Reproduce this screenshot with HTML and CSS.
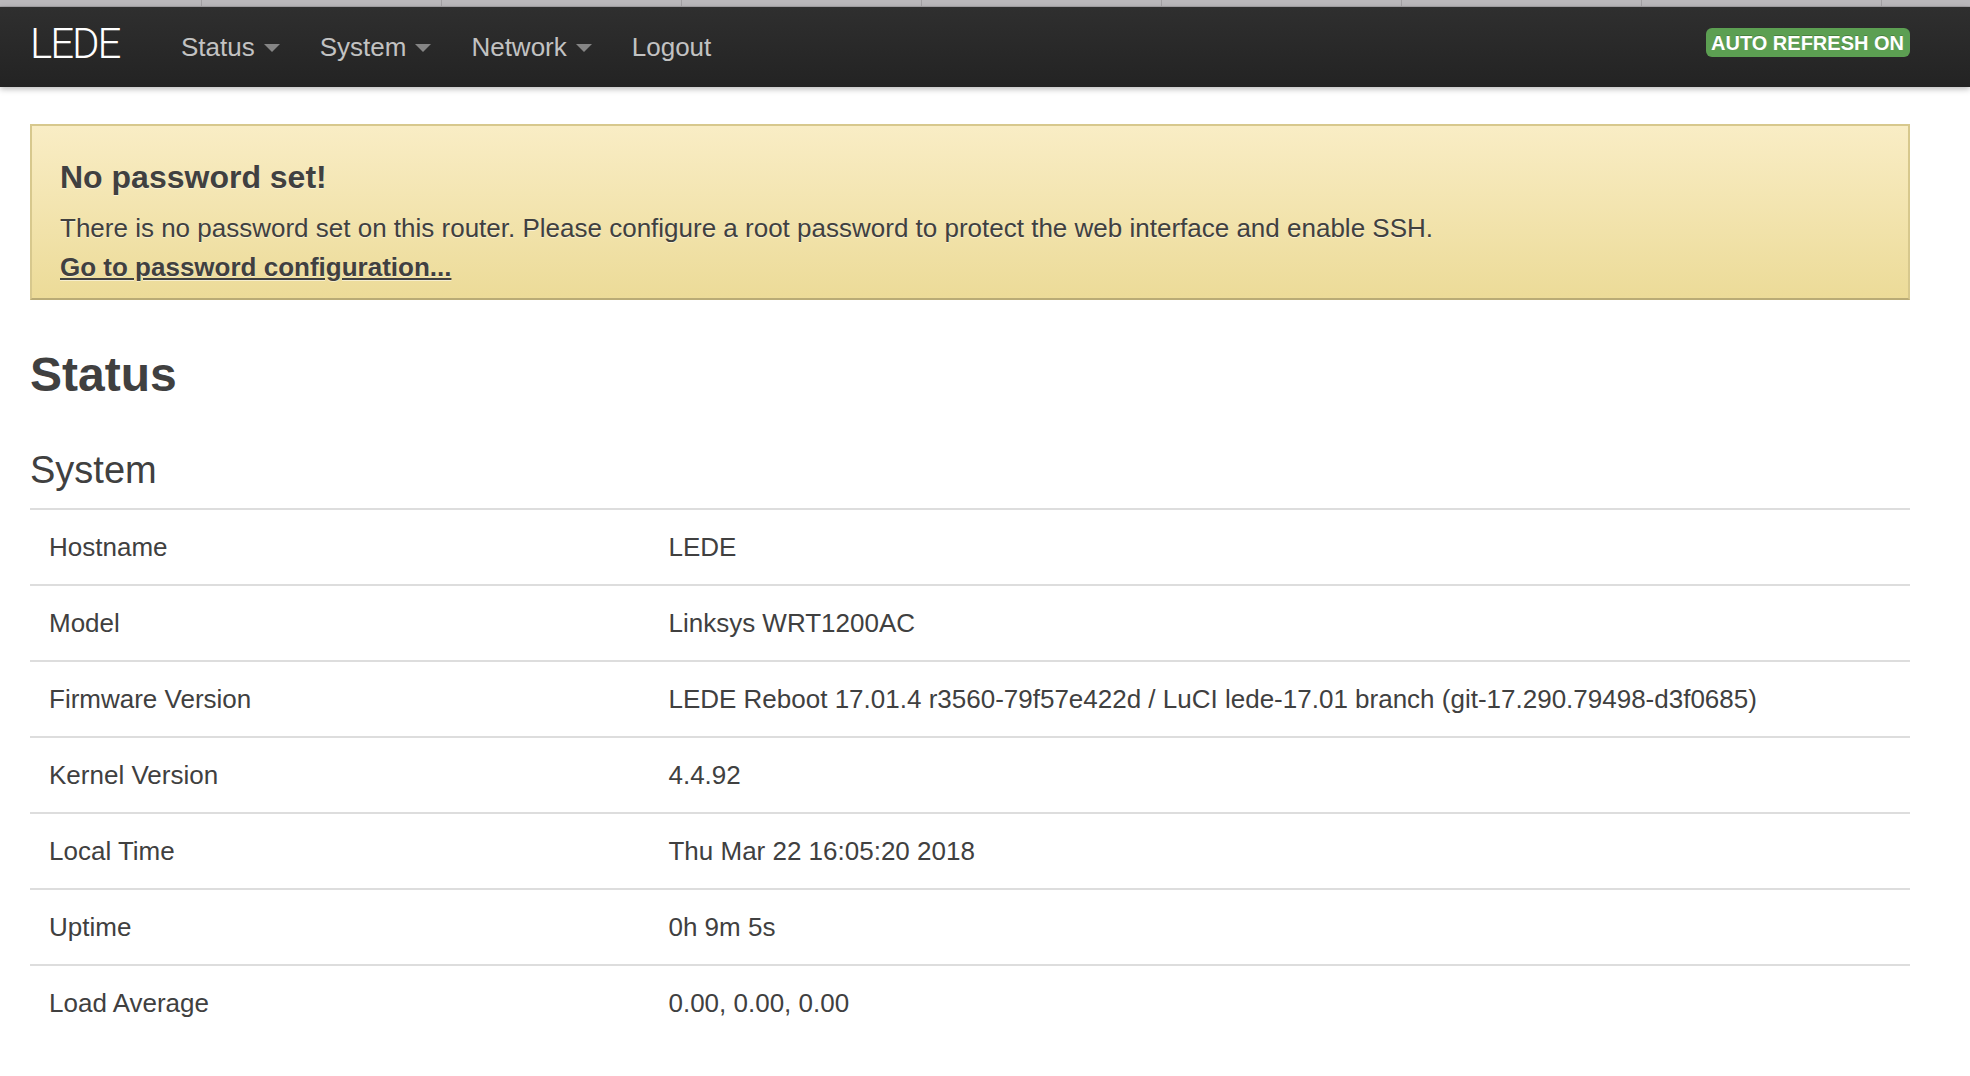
FILE: index.html
```html
<!DOCTYPE html>
<html lang="en">
<head>
<meta charset="utf-8">
<title>LEDE - Status</title>
<link rel="stylesheet" href="styles.css">
</head>
<body>
<div class="tabstrip">
  <span class="tab tab-first"></span>
  <span class="tab"></span>
  <span class="tab"></span>
  <span class="tab"></span>
  <span class="tab"></span>
  <span class="tab"></span>
  <span class="tab"></span>
  <span class="tab"></span>
  <span class="tab tab-last"></span>
</div>
<header class="navbar">
  <div class="navbar-inner">
    <a class="brand" href="#">LEDE</a>
    <ul class="nav">
      <li><a href="#">Status<span class="caret"></span></a></li>
      <li><a href="#">System<span class="caret"></span></a></li>
      <li><a href="#">Network<span class="caret"></span></a></li>
      <li><a href="#">Logout</a></li>
    </ul>
    <span class="badge">AUTO REFRESH ON</span>
  </div>
</header>
<main class="container">
  <div class="alert">
    <h4 class="alert-title">No password set!</h4>
    <p class="alert-text">There is no password set on this router. Please configure a root password to protect the web interface and enable SSH.<br><a class="alert-link" href="#">Go to password configuration...</a></p>
  </div>
  <h2 class="page-title">Status</h2>
  <section class="section">
    <h3 class="section-title">System</h3>
    <table class="info-table">
      <tr><td class="label">Hostname</td><td class="value">LEDE</td></tr>
      <tr><td class="label">Model</td><td class="value">Linksys WRT1200AC</td></tr>
      <tr><td class="label">Firmware Version</td><td class="value">LEDE Reboot 17.01.4 r3560-79f57e422d / LuCI lede-17.01 branch (git-17.290.79498-d3f0685)</td></tr>
      <tr><td class="label">Kernel Version</td><td class="value">4.4.92</td></tr>
      <tr><td class="label">Local Time</td><td class="value">Thu Mar 22 16:05:20 2018</td></tr>
      <tr><td class="label">Uptime</td><td class="value">0h 9m 5s</td></tr>
      <tr><td class="label">Load Average</td><td class="value">0.00, 0.00, 0.00</td></tr>
    </table>
  </section>
</main>
</body>
</html>
```

FILE: styles.css
```css
* {
  box-sizing: border-box;
}

html, body {
  margin: 0;
  padding: 0;
  background: #ffffff;
}

body {
  font-family: "Liberation Sans", Arial, sans-serif;
  font-size: 26px;
  line-height: 36px;
  color: #404040;
  overflow: hidden;
}

/* browser tab remnant strip */
.tabstrip {
  display: flex;
  height: 7px;
  background: #bab8bb;
  border-bottom: 1px solid #a7a5a8;
}

.tab {
  flex: none;
  width: 240px;
  height: 100%;
  border-left: 1px solid #a2a0a3;
}

.tab-first {
  width: 201px;
  border-left: none;
}

.tab-last {
  flex: 1;
  width: auto;
}

/* top navbar */
.navbar {
  height: 80px;
  background-color: #222;
  background-image: linear-gradient(to bottom, #2f2f2f, #232323);
  box-shadow: 0 2px 6px rgba(0, 0, 0, 0.28);
  position: relative;
  z-index: 2;
}

.navbar-inner {
  width: 1880px;
  margin-left: 30px;
  height: 80px;
  display: flex;
  align-items: center;
}

.brand {
  font-family: Roboto, "Liberation Sans", sans-serif;
  font-weight: 300;
  font-size: 42px;
  line-height: 44px;
  letter-spacing: -2px;
  color: #ffffff;
  text-decoration: none;
  margin-bottom: 6px;
  width: 131px;
  flex: none;
}

.nav {
  list-style: none;
  margin: 0;
  padding: 0;
  display: flex;
  align-items: center;
}

.nav a {
  display: flex;
  align-items: center;
  padding: 0 20px;
  color: #c2c2c2;
  text-decoration: none;
  font-size: 26px;
  line-height: 36px;
}

.caret {
  display: inline-block;
  width: 0;
  height: 0;
  margin-left: 9px;
  margin-top: 2px;
  border-left: 8px solid transparent;
  border-right: 8px solid transparent;
  border-top: 8px solid #858585;
}

.badge {
  margin-left: auto;
  background: #5c9f52;
  color: #ffffff;
  font-weight: bold;
  font-size: 20px;
  line-height: 22px;
  padding: 4px 6px 3px 5px;
  border-radius: 6px;
  text-transform: uppercase;
  text-shadow: 0 -1px 0 rgba(0, 0, 0, 0.2);
  margin-bottom: 10px;
}

/* main content */
.container {
  width: 1880px;
  margin-left: 30px;
}

.alert {
  margin-top: 37px;
  padding: 33px 28px 11px;
  background-color: #eedc94;
  background-image: linear-gradient(to bottom, #f9edc5, #ecdb98);
  border: 2px solid #d7c88d;
  border-bottom-color: #b9ab76;
  text-shadow: 0 1px 0 rgba(255, 255, 255, 0.5);
}

.alert-title {
  margin: 0 0 14px;
  font-size: 32px;
  line-height: 36px;
  font-weight: bold;
}

.alert-text {
  margin: 0;
  font-size: 26px;
  line-height: 39px;
}

.alert-link {
  color: #404040;
  font-weight: bold;
  text-decoration: underline;
}

.page-title {
  margin: 49px 0 0;
  font-size: 48px;
  line-height: 52px;
  font-weight: bold;
}

.section-title {
  margin: 49px 0 18px;
  font-size: 38px;
  line-height: 40px;
  font-weight: normal;
}

.info-table {
  width: 100%;
  border-collapse: collapse;
}

.info-table tr {
  border-top: 2px solid #dddddd;
}

.info-table td {
  padding: 19px 19px;
  line-height: 36px;
  vertical-align: top;
}

.info-table .label {
  width: 32.95%;
}
```
